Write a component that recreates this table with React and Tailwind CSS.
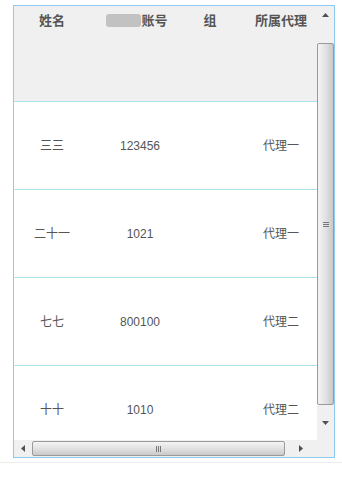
import React from 'react';

const rows = [
  { name: '三三', account: '123456', group: '', agent: '代理一' },
  { name: '二十一', account: '1021', group: '', agent: '代理一' },
  { name: '七七', account: '800100', group: '', agent: '代理二' },
  { name: '十十', account: '1010', group: '', agent: '代理二' },
];

const font = { fontFamily: '"Liberation Sans", "Noto Sans CJK SC", sans-serif' };

function Arrow({ dir }) {
  const pts = {
    up: '0,4 7,4 3.5,0',
    down: '0,0 7,0 3.5,4',
    left: '4,0 4,7 0,3.5',
    right: '0,0 0,7 4,3.5',
  }[dir];
  const vertical = dir === 'up' || dir === 'down';
  return (
    <svg width={vertical ? 7 : 4} height={vertical ? 4 : 7} className="block">
      <polygon points={pts} fill="#505050" />
    </svg>
  );
}

export default function App() {
  return (
    <div className="w-[342px] h-[477px] bg-white pt-[5px]" style={font}>
      {/* Table frame */}
      <div className="ml-[13px] w-[322px] h-[453px] border border-[#8ecbf0] grid grid-cols-[303px_17px] grid-rows-[434px_17px]">
        {/* Content */}
        <div className="overflow-hidden">
          <div className="w-[320px]">
            <div className="h-[96px] bg-[#f0f0f0] border-b border-[#a9e0ea] grid grid-cols-[76px_100px_40px_104px] pt-[6px] text-[13px] font-bold text-[#555] leading-[17px]">
              <div className="text-center">姓名</div>
              <div className="flex justify-center items-center h-[17px] pr-[6px]">
                <span className="inline-block w-[35px] h-[13px] rounded-[3px] bg-[#c2c2c2] blur-[0.5px]" />
                <span>账号</span>
              </div>
              <div className="text-center">组</div>
              <div className="text-center pr-[2px]">所属代理</div>
            </div>
            {rows.map((r, i) => (
              <div
                key={i}
                className="h-[88px] border-b border-[#aee3e8] grid grid-cols-[76px_100px_40px_104px] items-center text-[12px] text-[#555]"
              >
                <div className="text-center">{r.name}</div>
                <div className="text-center">{r.account}</div>
                <div className="text-center">{r.group}</div>
                <div className="text-center pr-[2px]">{r.agent}</div>
              </div>
            ))}
          </div>
        </div>

        {/* Vertical scrollbar */}
        <div className="bg-[#f0f0f0] flex flex-col">
          <div className="h-[17px] flex items-center justify-center">
            <Arrow dir="up" />
          </div>
          <div className="h-[20px]" />
          <div className="h-[362px] mx-[0px] border border-[#9a9a9a] rounded-[2px] bg-gradient-to-r from-[#f4f4f4] via-[#e2e2e2] to-[#c9c9c9] flex items-center justify-center">
            <div className="flex flex-col gap-[1px]">
              <div className="w-[6px] h-[1px] bg-[#777]" />
              <div className="w-[6px] h-[1px] bg-[#777]" />
              <div className="w-[6px] h-[1px] bg-[#777]" />
            </div>
          </div>
          <div className="flex-1 flex items-center justify-center">
            <Arrow dir="down" />
          </div>
        </div>

        {/* Horizontal scrollbar */}
        <div className="bg-[#f0f0f0] flex items-center">
          <div className="w-[18px] h-full flex items-center justify-center">
            <Arrow dir="left" />
          </div>
          <div className="w-[253px] h-[15px] border border-[#9a9a9a] rounded-[2px] bg-gradient-to-b from-[#f4f4f4] via-[#e2e2e2] to-[#c9c9c9] flex items-center justify-center">
            <div className="flex gap-[1px]">
              <div className="w-[1px] h-[6px] bg-[#777]" />
              <div className="w-[1px] h-[6px] bg-[#777]" />
              <div className="w-[1px] h-[6px] bg-[#777]" />
            </div>
          </div>
          <div className="flex-1 h-full flex items-center justify-center">
            <Arrow dir="right" />
          </div>
        </div>
        <div className="bg-[#f0f0f0]" />
      </div>
      <div className="mt-[4px] h-[1px] bg-[#ececec]" />
    </div>
  );
}
